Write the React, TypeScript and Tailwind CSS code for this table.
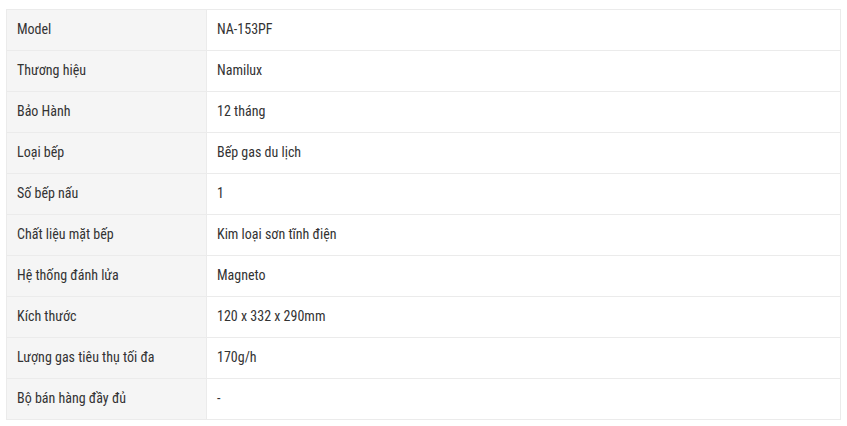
const specs: [string, string][] = [
  ["Model", "NA-153PF"],
  ["Thương hiệu", "Namilux"],
  ["Bảo Hành", "12 tháng"],
  ["Loại bếp", "Bếp gas du lịch"],
  ["Số bếp nấu", "1"],
  ["Chất liệu mặt bếp", "Kim loại sơn tĩnh điện"],
  ["Hệ thống đánh lửa", "Magneto"],
  ["Kích thước", "120 x 332 x 290mm"],
  ["Lượng gas tiêu thụ tối đa", "170g/h"],
  ["Bộ bán hàng đầy đủ", "-"],
];

export default function App() {
  return (
    <div className="pl-[6px] pt-[9px] bg-white font-['Roboto',sans-serif] [font-stretch:semi-condensed] text-[14px] text-[#333]">
      <table className="w-[835px] border-collapse">
        <tbody>
          {specs.map(([label, value]) => (
            <tr key={label}>
              <td className="w-[200px] h-[41px] border border-[#ebebeb] bg-[#f5f5f5] px-[10px] pt-0 pb-[2px] leading-5">
                {label}
              </td>
              <td className="h-[41px] border border-[#ebebeb] px-[10px] pt-0 pb-[2px] leading-5">{value}</td>
            </tr>
          ))}
        </tbody>
      </table>
    </div>
  );
}
